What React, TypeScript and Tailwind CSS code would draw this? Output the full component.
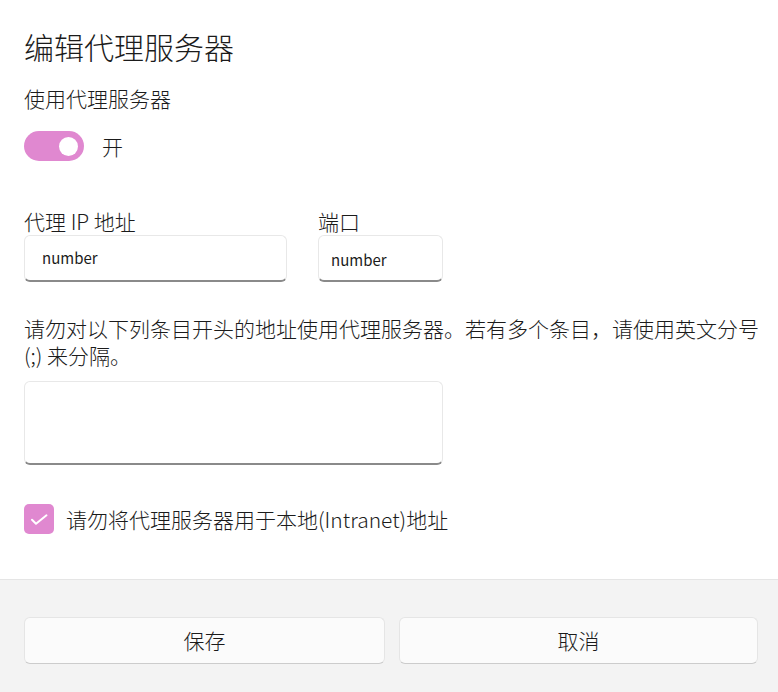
import React, { useState } from 'react';

const font = { fontFamily: '"Noto Sans CJK SC", "Noto Sans", sans-serif' };

function Toggle({ on, onChange }: { on: boolean; onChange: (v: boolean) => void }) {
  return (
    <button
      onClick={() => onChange(!on)}
      className={`flex h-[30px] w-[60px] items-center rounded-full px-[6px] ${on ? 'justify-end bg-[#e088d0]' : 'justify-start border border-[#8a8a8a] bg-white'}`}
    >
      <span className={`block h-[19px] w-[19px] rounded-full ${on ? 'bg-white' : 'bg-[#5d5d5d]'}`} />
    </button>
  );
}

function TextField({ width, pad }: { width: string; pad: string }) {
  return (
    <div className={`${width} h-[47px] rounded-[6px] border border-[#e8e8e8] border-b-[2px] border-b-[#8a8a8a] bg-white flex items-center ${pad}`}>
      <span className="text-[15px] font-normal leading-none text-[#1b1b1b]">number</span>
    </div>
  );
}

export default function App() {
  const [enabled, setEnabled] = useState(true);
  const [bypassLocal, setBypassLocal] = useState(true);

  return (
    <div className="flex h-[692px] w-[778px] flex-col bg-white font-light text-[#1b1b1b]" style={font}>
      <div className="flex-1 px-6 pt-[26px]">
        <h1 className="text-[30px] leading-[40px]">编辑代理服务器</h1>
        <p className="mt-[18px] text-[21px] leading-[28px]">使用代理服务器</p>

        <div className="mt-[19px] flex items-center gap-[18px]">
          <Toggle on={enabled} onChange={setEnabled} />
          <span className="text-[21px] leading-[28px]">{enabled ? '开' : '关'}</span>
        </div>

        <div className="mt-[46px] flex gap-[31px]">
          <div className="flex flex-col">
            <label className="text-[21px] leading-[28px]">代理 IP 地址</label>
            <TextField width="w-[263px]" pad="pl-[17px] pb-[2px]" />
          </div>
          <div className="flex flex-col">
            <label className="text-[21px] leading-[28px]">端口</label>
            <TextField width="w-[125px]" pad="pl-[12px] pt-[2px]" />
          </div>
        </div>

        <p className="mt-[33px] text-[21px] leading-[27px]">
          <span className="whitespace-nowrap">请勿对以下列条目开头的地址使用代理服务器。若有多个条目，请使用英文分号</span>
          <br />
          (;) 来分隔。
        </p>

        <div className="mt-[12px] h-[84px] w-[419px] rounded-[6px] border border-[#e8e8e8] border-b-[2px] border-b-[#8a8a8a] bg-white" />

        <label className="mt-[39px] flex items-center gap-[12px]" onClick={() => setBypassLocal(!bypassLocal)}>
          <span className={`flex h-[30px] w-[30px] items-center justify-center rounded-[5px] ${bypassLocal ? 'bg-[#e088d0]' : 'border border-[#8a8a8a] bg-white'}`}>
            {bypassLocal && (
              <svg width="30" height="30" viewBox="0 0 30 30" fill="none">
                <path d="M8 15.8l4 4 10.5-8.5" stroke="white" strokeWidth="2" strokeLinecap="round" strokeLinejoin="round" />
              </svg>
            )}
          </span>
          <span className="text-[21px] leading-[28px]">请勿将代理服务器用于本地(Intranet)地址</span>
        </label>
      </div>

      <div className="h-[113px] border-t border-[#e5e5e5] bg-[#f3f3f3] pl-6 pt-[37px]">
        <div className="flex gap-[14px]">
          <button className="h-[47px] w-[361px] rounded-[6px] border border-[#e5e5e5] border-b-[#cccccc] bg-[#fbfbfb] text-[21px] leading-none text-[#1b1b1b]">保存</button>
          <button className="h-[47px] w-[359px] rounded-[6px] border border-[#e5e5e5] border-b-[#cccccc] bg-[#fbfbfb] text-[21px] leading-none text-[#1b1b1b]">取消</button>
        </div>
      </div>
    </div>
  );
}
